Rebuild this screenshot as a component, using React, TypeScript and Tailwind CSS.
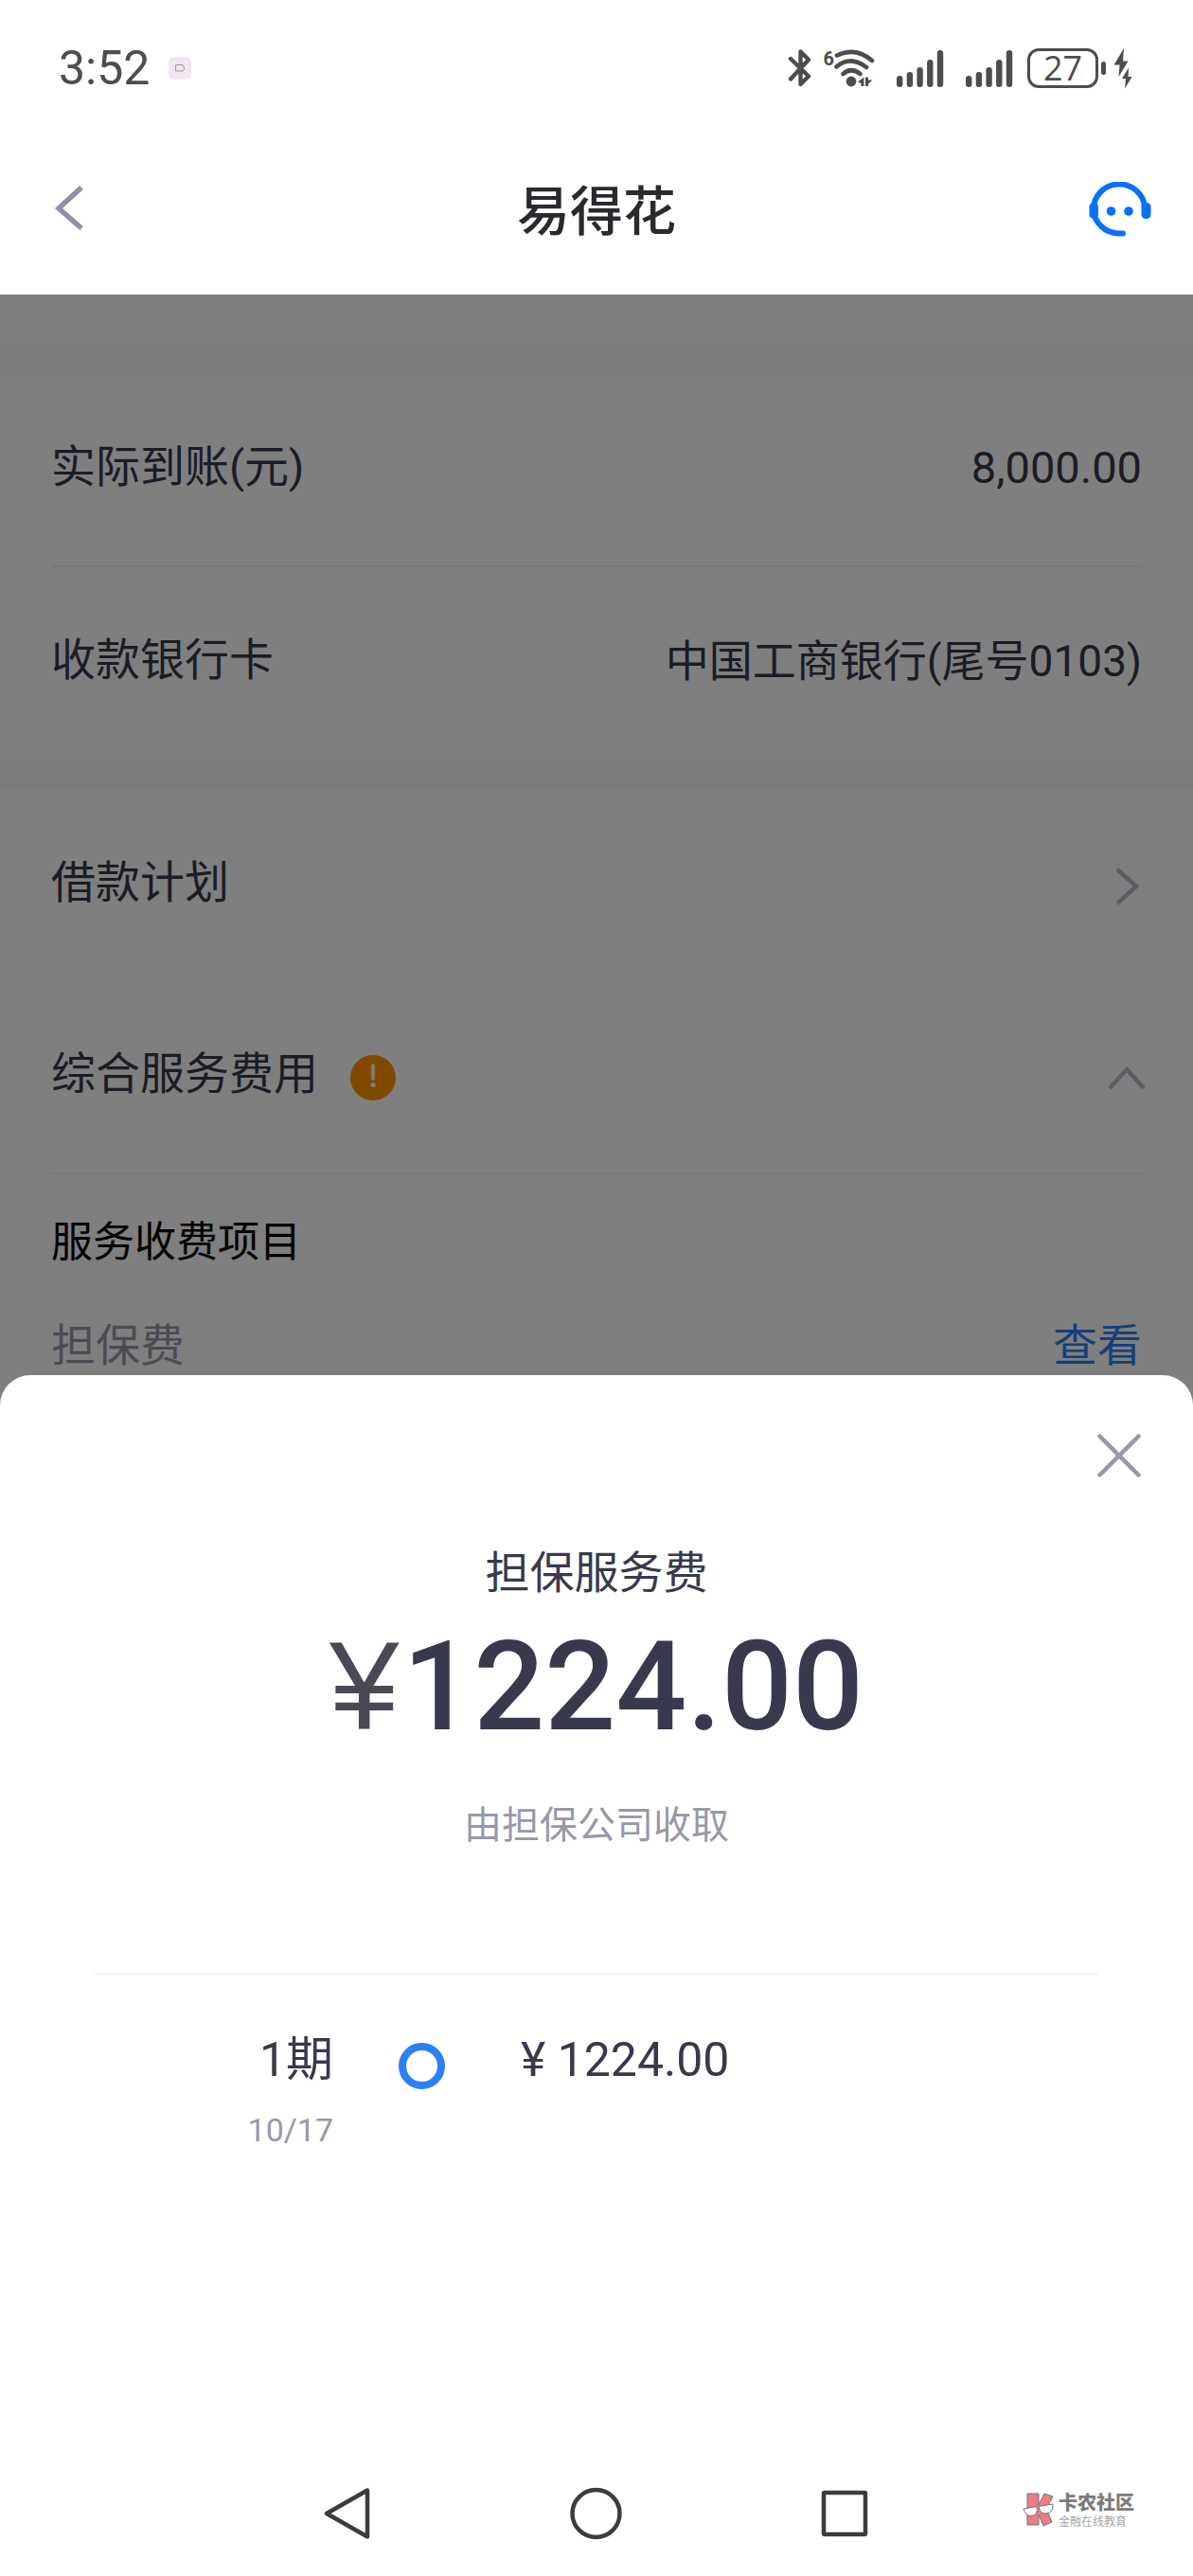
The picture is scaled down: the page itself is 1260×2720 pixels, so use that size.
import type { ReactNode } from "react";

function SignalBars() {
  const bars = [12, 16, 21, 29, 39];
  return (
    <svg width="50" height="42" viewBox="0 0 50 42" fill="#4d4d4d">
      {bars.map((h, i) => (
        <rect key={h} x={i * 10.7} y={41 - h} width="6.4" height={h} rx="3.2" />
      ))}
    </svg>
  );
}

function BluetoothIcon() {
  return (
    <svg width="26" height="42" viewBox="0 0 26 42" fill="none" stroke="#4d4d4d" strokeWidth="4.4" strokeLinecap="round" strokeLinejoin="round">
      <path d="M3 11 L22 29.5 L13.5 38 V3.5 L22 12 L3 32.5" />
    </svg>
  );
}

function WifiIcon() {
  return (
    <svg width="44" height="42" viewBox="0 0 44 42" fill="none" stroke="#4d4d4d" strokeWidth="4.6" strokeLinecap="round">
      <path d="M3 7.5 Q23 -2 40 13" />
      <path d="M2.5 19.5 Q17 7 34 20" />
      <path d="M9.5 27 Q18 19.5 27.5 27" />
      <circle cx="18" cy="35" r="5.4" fill="#4d4d4d" stroke="none" />
      <path d="M25 35.5 L31.5 30.5 V40 H28.5 V37 Z M33 30.5 V40 L36 40 V37.5 L40.5 33.5 H36 V30.5 Z" fill="#4d4d4d" stroke="none" />
    </svg>
  );
}

function ChargeIcon() {
  return (
    <svg width="20" height="44" viewBox="0 0 20 44" fill="#4d4d4d">
      <path d="M11 1 L0.5 18.5 H6.5 L5.5 31 L15.5 14.5 H10 Z" />
      <path d="M16 21.5 L9 33 H13 L12 43.5 L19.5 31 H15.5 Z" />
    </svg>
  );
}

function StatusBar() {
  return (
    <div className="flex h-36 items-center justify-between pl-[62px] pr-[64px]">
      <div className="flex items-center">
        <span className="text-[50px] leading-[62px] text-[#4d4d4d]">3:52</span>
        <span className="ml-5 flex size-6 items-center justify-center rounded-md bg-[#efe7ef]">
          <svg width="12" height="10" viewBox="0 0 12 10" fill="none" stroke="#a596a8" strokeWidth="1">
            <path d="M1.5 1.5 H9 V3 L10.5 4 V6.5 L9 8 H1.5 Z" />
          </svg>
        </span>
      </div>
      <div className="flex items-center">
        <BluetoothIcon />
        <span className="ml-3 self-start text-xl font-bold leading-6 text-[#4d4d4d]">6</span>
        <WifiIcon />
        <span className="ml-[22px]">
          <SignalBars />
        </span>
        <span className="ml-[23px]">
          <SignalBars />
        </span>
        <span className="ml-[15px] flex h-[42px] w-[75px] items-center justify-center rounded-xl border-[3px] border-[#4d4d4d] font-['Open_Sans',sans-serif] text-4xl font-medium leading-9 text-[#4d4d4d]">
          27
        </span>
        <span className="ml-[3px] h-3.5 w-[5px] rounded-full bg-[#4d4d4d]" />
        <span className="ml-2">
          <ChargeIcon />
        </span>
      </div>
    </div>
  );
}

function TitleBar() {
  return (
    <div className="grid h-[167px] grid-cols-3 items-center px-[44px] pb-[13px]">
      <button type="button" aria-label="返回" className="justify-self-start px-3 pb-4 pt-3">
        <svg width="32" height="48" viewBox="0 0 32 48" fill="none" stroke="#918fa3" strokeWidth="5.5">
          <path d="M30 3 L6 25 L30 46" />
        </svg>
      </button>
      <h1 className="pt-1.5 text-center text-[56px] font-medium leading-[80px] text-[#2a2a2e]">易得花</h1>
      <button type="button" aria-label="客服" className="justify-self-end">
        <svg width="66" height="58" viewBox="0 0 66 58" fill="none">
          <path d="M59 27 A27 26 0 1 0 32.5 54.5 H36" stroke="#0a70fa" strokeWidth="6" strokeLinecap="round" />
          <rect x="0.5" y="22" width="9.5" height="17" rx="4.5" fill="#0a70fa" />
          <rect x="55.5" y="22" width="10" height="17" rx="4.5" fill="#0a70fa" />
          <circle cx="23.5" cy="31" r="4.8" fill="#0a70fa" />
          <circle cx="42" cy="31" r="4.8" fill="#0a70fa" />
        </svg>
      </button>
    </div>
  );
}

interface RowProps {
  label: string;
  divider?: boolean;
  badge?: ReactNode;
  children: ReactNode;
}

function Row({ label, divider, badge, children }: RowProps) {
  return (
    <div
      className={`flex h-[203px] items-center justify-between text-[47px] leading-[60px] text-[#38394d] ${
        divider ? "border-b-2 border-[#f3f3f5]" : ""
      }`}
    >
      <div className="flex items-center">
        <span className="pb-2">{label}</span>
        {badge}
      </div>
      {children}
    </div>
  );
}

function LoanDetails() {
  return (
    <div className="bg-white">
      <div className="h-[53px]" />
      <div className="h-8 bg-[#f5f8fb]" />
      <section className="px-[54px]">
        <Row label="实际到账(元)" divider>
          <span className="pb-1.5">8,000.00</span>
        </Row>
        <Row label="收款银行卡">
          <span className="pb-1.5 text-[46px]">中国工商银行(尾号0103)</span>
        </Row>
      </section>
      <div className="h-8 bg-[#f5f8fb]" />
      <section className="px-[54px]">
        <Row label="借款计划">
          <button type="button" aria-label="借款计划">
            <svg width="28" height="40" viewBox="0 0 28 40" fill="none" stroke="#b9b8c8" strokeWidth="4.5">
              <path d="M2 2 L22 20 L2 38" />
            </svg>
          </button>
        </Row>
        <Row
          label="综合服务费用"
          divider
          badge={
            <svg className="ml-[34px]" width="48" height="48" viewBox="0 0 48 48">
              <circle cx="24" cy="24" r="24" fill="#ff9500" />
              <path d="M24 11 V25" stroke="#fff" strokeWidth="3.5" strokeLinecap="round" />
              <circle cx="24" cy="31.5" r="2.5" fill="#fff" />
            </svg>
          }
        >
          <button type="button" aria-label="收起">
            <svg className="-mr-1" width="40" height="26" viewBox="0 0 40 26" fill="none" stroke="#b9b8c8" strokeWidth="4.5">
              <path d="M2 24 L20 4 L38 24" />
            </svg>
          </button>
        </Row>
        <h2 className="pt-[42px] text-[44px] leading-[60px] text-black">服务收费项目</h2>
        <div className="mt-[49px] flex justify-between text-[47px] leading-[60px]">
          <span className="text-[#9897a9]">担保费</span>
          <a href="#fee" className="text-[#2b7ff5]">
            查看
          </a>
        </div>
      </section>
    </div>
  );
}

function FeeSheet() {
  return (
    <div
      role="dialog"
      aria-label="担保服务费"
      className="rounded-t-[32px] bg-white pb-[315px] text-center text-[#38394d]"
    >
      <div className="flex justify-end px-[54px] pt-[61px]">
        <button type="button" aria-label="关闭">
          <svg width="48" height="48" viewBox="0 0 48 48" stroke="#9897a9" strokeWidth="4.5" strokeLinecap="round">
            <path d="M3.5 3.5 L44.5 44.5 M44.5 3.5 L3.5 44.5" />
          </svg>
        </button>
      </div>
      <h2 className="mt-[70px] text-[47px] leading-[60px]">担保服务费</h2>
      <p className="mt-5 text-[132px] font-medium leading-[140px]">
        <span className="mr-1 font-['Liberation_Sans',sans-serif] font-normal text-[#484955]">¥</span>1224.00
      </p>
      <p className="mt-[53px] text-[40px] leading-[48px] text-[#9897a9]">由担保公司收取</p>
      <hr className="mx-[100px] mt-[131px] border-t-2 border-[#f3f3f5]" />
      <ul className="mt-[60px]">
        <li className="flex items-start">
          <div className="w-[352px] text-right">
            <div className="text-[50px] leading-[60px]">1期</div>
            <div className="mt-5 text-[34px] leading-[48px] text-[#9897a9]">10/17</div>
          </div>
          <span className="ml-[69px] mt-3 size-[49px] rounded-full border-8 border-[#2b80f5]" />
          <span className="ml-20 text-[50px] leading-[60px]">¥ 1224.00</span>
        </li>
      </ul>
    </div>
  );
}

function Watermark() {
  return (
    <div className="flex items-center gap-1 font-['Noto_Sans_CJK_SC',sans-serif]">
      <svg width="34" height="36" viewBox="0 0 34 36" stroke="#6f7478" strokeWidth="1">
        <path d="M5 1 H17 V13 L23 1 L32 4 L25 17 L31 31 L22 35 L17 23 V34 H5 Z" fill="#ee7c84" />
        <path d="M1 17 L15 14.5 Q17 24 9 24.5 Q3 24.5 1 17 Z" fill="#fff" />
        <path d="M17 14.5 L32 12 Q33 21 25 22 Q18 22.5 17 14.5 Z" fill="#fff" />
      </svg>
      <div>
        <div className="text-xl font-black leading-6 text-[#7b7b7b]">卡农社区</div>
        <div className="text-xs leading-4 text-[#a5a5a5]">金融在线教育</div>
      </div>
    </div>
  );
}

function NavigationBar() {
  return (
    <nav className="grid h-[132px] grid-cols-[1fr_auto_1fr] items-center bg-white">
      <span />
      <div className="flex items-center gap-[206px]">
        <button type="button" aria-label="后退">
          <svg width="56" height="56" viewBox="0 0 56 56" fill="none" stroke="#3c3c3c" strokeWidth="4.5" strokeLinejoin="round">
            <path d="M48 3.5 V52.5 L5 28 Z" />
          </svg>
        </button>
        <button type="button" aria-label="主页">
          <svg width="56" height="56" viewBox="0 0 56 56" fill="none" stroke="#3c3c3c" strokeWidth="4.5">
            <circle cx="27.5" cy="28" r="25" />
          </svg>
        </button>
        <button type="button" aria-label="最近任务">
          <svg width="56" height="56" viewBox="0 0 56 56" fill="none" stroke="#3c3c3c" strokeWidth="4.5" strokeLinejoin="round">
            <rect x="6" y="6" width="44" height="44" rx="1" />
          </svg>
        </button>
      </div>
      <div className="flex justify-end pb-2 pr-[62px]">
        <Watermark />
      </div>
    </nav>
  );
}

export default function App() {
  return (
    <div className="flex min-h-screen flex-col bg-white font-['Roboto','Noto_Sans_CJK_SC',sans-serif]">
      <header>
        <StatusBar />
        <TitleBar />
      </header>
      <main className="relative flex-1 overflow-hidden">
        <LoanDetails />
        <div className="absolute inset-0 flex flex-col justify-end bg-black/50">
          <FeeSheet />
        </div>
      </main>
      <NavigationBar />
    </div>
  );
}
